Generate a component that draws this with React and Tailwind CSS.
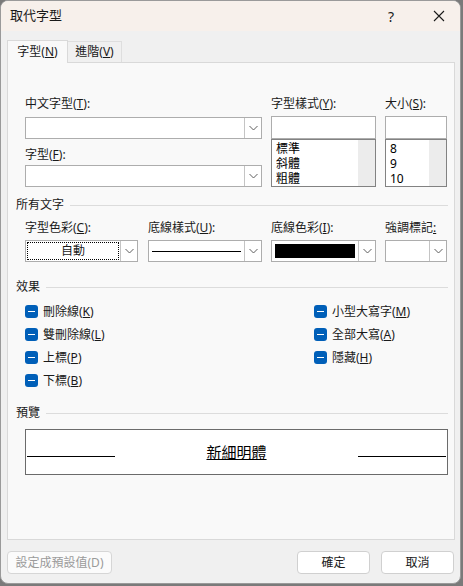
import React from 'react';

const font = { fontFamily: '"Noto Sans", "Noto Sans CJK TC", sans-serif' };

function Chevron() {
  return (
    <svg width="9" height="6" viewBox="0 0 9 6" fill="none">
      <path d="M0.5 1 L4.5 5 L8.5 1" stroke="#5f5f5f" strokeWidth="1" />
    </svg>
  );
}

function Combo({ className = '', children }) {
  return (
    <div className={`flex h-[22px] border border-[#adadad] bg-white ${className}`}>
      <div className="flex-1 min-w-0 flex items-center">{children}</div>
      <div className="w-[17px] border-l border-[#c4c4c4] flex items-center justify-center">
        <Chevron />
      </div>
    </div>
  );
}

function ListBox({ items }) {
  return (
    <div className="flex h-[48px] border border-[#828282] bg-white overflow-hidden">
      <div className="flex-1 pt-px pl-[4px] text-[12px] text-black">
        {items.map((it) => (
          <div key={it} className="h-[15px] leading-[15px] overflow-hidden">{it}</div>
        ))}
      </div>
      <div className="w-[17px] bg-[#ececec]" />
    </div>
  );
}

function Header({ children, className = '' }) {
  return (
    <div className={`flex items-center h-[14px] ml-[8px] mr-[6px] ${className}`}>
      <span className="text-[12px] leading-[14px] text-[#1a1a1a]">{children}</span>
      <div className="flex-1 h-px bg-[#dcdcdc] ml-[6px]" />
    </div>
  );
}

function Label({ children }) {
  return <div className="text-[12px] leading-[14px] h-[14px] text-[#1a1a1a] whitespace-nowrap">{children}</div>;
}

function Check({ children }) {
  return (
    <div className="flex items-center h-[23px]">
      <div className="w-[13px] h-[13px] rounded-[3px] bg-[#005fb8] flex items-center justify-center">
        <div className="w-[7px] h-[1.5px] bg-white" />
      </div>
      <span className="ml-[5px] text-[12px] leading-[14px] text-[#1a1a1a]">{children}</span>
    </div>
  );
}

export default function App() {
  return (
    <div className="w-[463px] h-[586px] bg-[#7a7a7a] overflow-hidden" style={font}>
      <div className="w-[461px] h-[584px] rounded-lg border border-[#9a9a9a] bg-[#f0f0f0] overflow-hidden flex flex-col">
        {/* Title bar */}
        <div className="h-[30px] bg-[#f7f0eb] flex items-center pl-[9px]">
          <span className="text-[13px] text-[#1a1a1a]">取代字型</span>
          <span className="ml-auto text-[14px] text-[#1a1a1a] mr-[39px]">?</span>
          <svg width="12" height="12" viewBox="0 0 12 12" className="mr-[15px]">
            <path d="M1 1 L11 11 M11 1 L1 11" stroke="#1a1a1a" strokeWidth="1.1" />
          </svg>
        </div>

        {/* Tabs */}
        <div className="flex items-end mt-[9px] ml-[6px] h-[23px] relative z-10">
          <div className="w-[61px] h-[23px] bg-[#f9f9f9] border border-b-0 border-[#d9d9d9] flex items-center justify-center text-[12px] text-[#1a1a1a]">
            字型(<u>N</u>)
          </div>
          <div className="w-[54px] h-[21px] mb-px bg-[#f0f0f0] border border-l-0 border-b-0 border-[#dedede] flex items-center justify-center text-[12px] text-[#1a1a1a]">
            進階(<u>V</u>)
          </div>
        </div>

        {/* Panel */}
        <div className="ml-[6px] w-[448px] h-[478px] -mt-px bg-[#f9f9f9] border border-[#d9d9d9] pt-[34px]">
          {/* Top font grid */}
          <div className="ml-[17px] mr-[6px] flex gap-[9px]">
            <div className="w-[237px]">
              <Label>中文字型(<u>T</u>):</Label>
              <Combo className="mt-[6px]" />
              <div className="mt-[9px]">
                <Label>字型(<u>F</u>):</Label>
              </div>
              <Combo className="mt-[3px]" />
            </div>
            <div className="w-[105px]">
              <Label>字型樣式(<u>Y</u>):</Label>
              <div className="mt-[5px] h-[23px] border border-[#adadad] bg-white" />
              <ListBox items={['標準', '斜體', '粗體']} />
            </div>
            <div className="w-[62px]">
              <Label>大小(<u>S</u>):</Label>
              <div className="mt-[5px] h-[23px] border border-[#adadad] bg-white" />
              <ListBox items={['8', '9', '10']} />
            </div>
          </div>

          <Header className="mt-[11px]">所有文字</Header>

          <div className="ml-[17px] mr-[6px] flex mt-[9px]">
            <div className="w-[113px]">
              <Label>字型色彩(<u>C</u>):</Label>
              <Combo className="mt-[5px]">
                <div className="mx-[1px] h-[18px] flex-1 border border-dotted border-black flex items-center justify-center text-[12px] text-[#1a1a1a]">
                  自動
                </div>
              </Combo>
            </div>
            <div className="w-[114px] ml-[10px]">
              <Label>底線樣式(<u>U</u>):</Label>
              <Combo className="mt-[5px]">
                <div className="mx-[3px] flex-1 h-px bg-black" />
              </Combo>
            </div>
            <div className="w-[105px] ml-[9px]">
              <Label>底線色彩(<u>I</u>):</Label>
              <Combo className="mt-[5px]">
                <div className="mx-[3px] flex-1 h-[14px] bg-black" />
              </Combo>
            </div>
            <div className="w-[62px] ml-[9px]">
              <Label>強調標記<u>:</u></Label>
              <Combo className="mt-[5px]" />
            </div>
          </div>

          <Header className="mt-[18px]">效果</Header>

          <div className="ml-[17px] mr-[6px] mt-[6px] flex">
            <div className="w-[289px]">
              <Check>刪除線(<u>K</u>)</Check>
              <Check>雙刪除線(<u>L</u>)</Check>
              <Check>上標(<u>P</u>)</Check>
              <Check>下標(<u>B</u>)</Check>
            </div>
            <div>
              <Check>小型大寫字(<u>M</u>)</Check>
              <Check>全部大寫(<u>A</u>)</Check>
              <Check>隱藏(<u>H</u>)</Check>
            </div>
          </div>

          <Header className="mt-[14px]">預覽</Header>

          <div className="ml-[17px] mr-[6px] mt-[9px] h-[46px] border border-[#6b6b6b] bg-white flex items-center px-[1px]">
            <div className="w-[88px] h-px bg-black mt-[8px]" />
            <div className="flex-1 text-center">
              <span className="underline text-[15px] leading-[18px] text-black">新細明體</span>
            </div>
            <div className="w-[88px] h-px bg-black mt-[8px]" />
          </div>
        </div>

        {/* Buttons */}
        <div className="flex mt-[11px] ml-[6px] mr-[6px] h-[23px]">
          <div className="w-[105px] h-[23px] rounded-[4px] border border-[#d6d6d6] bg-[#fbfbfb] flex items-center justify-center text-[12px] text-[#9a9a9a]">
            設定成預設值(D)
          </div>
          <div className="ml-auto w-[73px] h-[23px] rounded-[4px] border border-[#d0d0d0] bg-white flex items-center justify-center text-[12px] text-[#1a1a1a]">
            確定
          </div>
          <div className="ml-[11px] w-[73px] h-[23px] rounded-[4px] border border-[#d0d0d0] bg-white flex items-center justify-center text-[12px] text-[#1a1a1a]">
            取消
          </div>
        </div>
      </div>
    </div>
  );
}
